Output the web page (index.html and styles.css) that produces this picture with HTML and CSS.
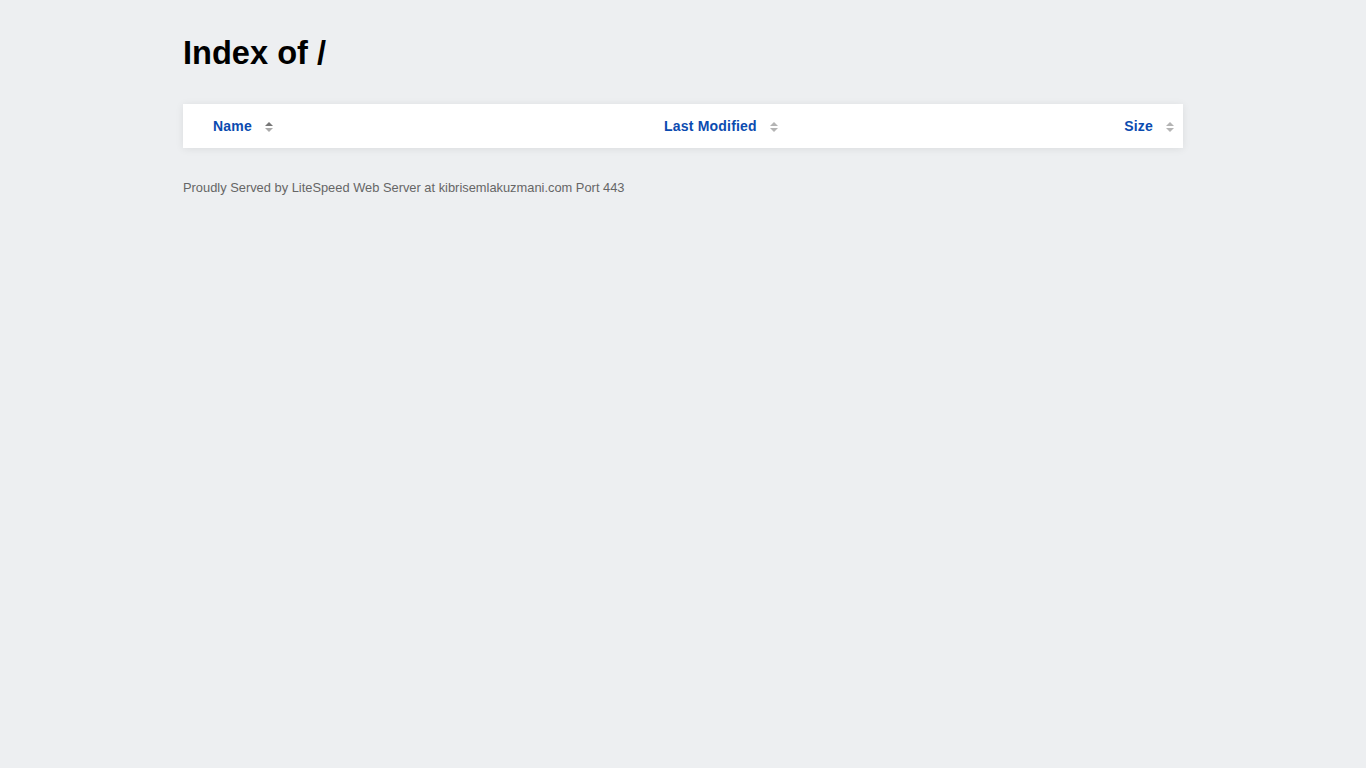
FILE: index.html
```html
<!DOCTYPE html>
<html>
<head>
<meta charset="utf-8">
<title>Index of /</title>
<link rel="stylesheet" href="styles.css">
</head>
<body>
<div class="wrap">
  <h1 class="title">Index of /</h1>
  <table class="listing">
    <thead>
      <tr>
        <th class="col-name"><a href="#">Name</a><svg class="sort" width="8" height="10" viewBox="0 0 8 10"><polygon points="0,4 4,0 8,4" fill="#777"/><polygon points="0,6 8,6 4,10" fill="#aaa"/></svg></th>
        <th class="col-date"><a href="#">Last Modified</a><svg class="sort" width="8" height="10" viewBox="0 0 8 10"><polygon points="0,4 4,0 8,4" fill="#b4b4b4"/><polygon points="0,6 8,6 4,10" fill="#b4b4b4"/></svg></th>
        <th class="col-size"><a href="#">Size</a><svg class="sort" width="8" height="10" viewBox="0 0 8 10"><polygon points="0,4 4,0 8,4" fill="#b4b4b4"/><polygon points="0,6 8,6 4,10" fill="#b4b4b4"/></svg></th>
      </tr>
    </thead>
  </table>
  <p class="footer">Proudly Served by LiteSpeed Web Server at kibrisemlakuzmani.com Port 443</p>
</div>
</body>
</html>
```
FILE: styles.css
```css
html, body {
  margin: 0;
  padding: 0;
  background: #edeff1;
  font-family: "Liberation Sans", Arial, sans-serif;
  color: #000;
}
.wrap {
  width: 1000px;
  margin: 0 auto;
  padding-top: 33px;
}
.title {
  font-size: 32.6px;
  font-weight: bold;
  line-height: 40px;
  margin: 0 0 31px 0;
}
.listing {
  width: 100%;
  border-collapse: collapse;
  background: #fff;
  box-shadow: 0 1px 8px rgba(0, 0, 0, 0.08);
}
.listing th {
  height: 44px;
  padding: 0;
  font-size: 14px;
  font-weight: bold;
  letter-spacing: 0.2px;
  vertical-align: middle;
  text-align: left;
  white-space: nowrap;
}
.listing th a {
  color: #0b4bb0;
  text-decoration: none;
}
.col-name {
  width: 451px;
  padding-left: 30px !important;
}
.col-date {
  width: 400px;
}
.col-size {
  text-align: right !important;
  padding-right: 9px !important;
}
.sort {
  margin-left: 13px;
  vertical-align: -1px;
}
.footer {
  margin: 32px 0 0 0;
  font-size: 12.86px;
  line-height: 16px;
  color: #666;
}
```
